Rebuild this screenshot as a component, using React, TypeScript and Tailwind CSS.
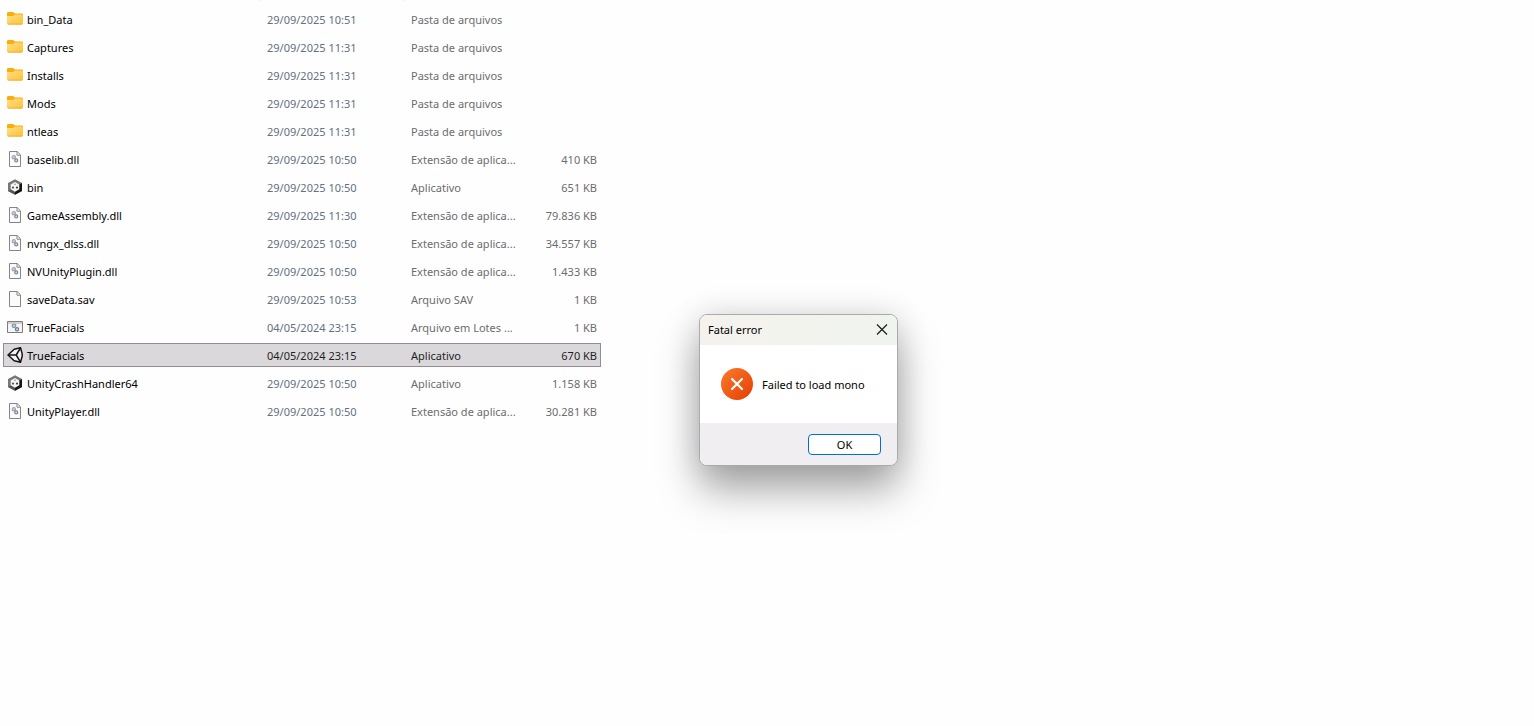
import type { ReactNode } from 'react';

type IconKind = 'folder' | 'dll' | 'cube' | 'blank' | 'batch' | 'unity';

interface FileEntry {
  name: string;
  icon: IconKind;
  modified: string;
  type: string;
  size?: string;
  selected?: boolean;
}

const files: FileEntry[] = [
  { name: 'bin_Data', icon: 'folder', modified: '29/09/2025 10:51', type: 'Pasta de arquivos' },
  { name: 'Captures', icon: 'folder', modified: '29/09/2025 11:31', type: 'Pasta de arquivos' },
  { name: 'Installs', icon: 'folder', modified: '29/09/2025 11:31', type: 'Pasta de arquivos' },
  { name: 'Mods', icon: 'folder', modified: '29/09/2025 11:31', type: 'Pasta de arquivos' },
  { name: 'ntleas', icon: 'folder', modified: '29/09/2025 11:31', type: 'Pasta de arquivos' },
  { name: 'baselib.dll', icon: 'dll', modified: '29/09/2025 10:50', type: 'Extensão de aplica...', size: '410 KB' },
  { name: 'bin', icon: 'cube', modified: '29/09/2025 10:50', type: 'Aplicativo', size: '651 KB' },
  { name: 'GameAssembly.dll', icon: 'dll', modified: '29/09/2025 11:30', type: 'Extensão de aplica...', size: '79.836 KB' },
  { name: 'nvngx_dlss.dll', icon: 'dll', modified: '29/09/2025 10:50', type: 'Extensão de aplica...', size: '34.557 KB' },
  { name: 'NVUnityPlugin.dll', icon: 'dll', modified: '29/09/2025 10:50', type: 'Extensão de aplica...', size: '1.433 KB' },
  { name: 'saveData.sav', icon: 'blank', modified: '29/09/2025 10:53', type: 'Arquivo SAV', size: '1 KB' },
  { name: 'TrueFacials', icon: 'batch', modified: '04/05/2024 23:15', type: 'Arquivo em Lotes ...', size: '1 KB' },
  { name: 'TrueFacials', icon: 'unity', modified: '04/05/2024 23:15', type: 'Aplicativo', size: '670 KB', selected: true },
  { name: 'UnityCrashHandler64', icon: 'cube', modified: '29/09/2025 10:50', type: 'Aplicativo', size: '1.158 KB' },
  { name: 'UnityPlayer.dll', icon: 'dll', modified: '29/09/2025 10:50', type: 'Extensão de aplica...', size: '30.281 KB' },
];

const page = (
  <>
    <path d="M2.5 .5h7.7l3.3 3.3v11.7h-11z" fill="#fbfbfb" stroke="#858585" />
    <path d="M10 .8v3.4h3.3" fill="none" stroke="#858585" />
  </>
);

const drawings: Record<IconKind, ReactNode> = {
  folder: (
    <>
      <defs>
        <linearGradient id="folder-front" x1="0" y1="0" x2="1" y2="1">
          <stop offset="0" stopColor="#ffe08a" />
          <stop offset="1" stopColor="#fcc135" />
        </linearGradient>
      </defs>
      <path d="M0 2.4C0 1.6 .6 1 1.4 1h4.1c.5 0 .8 .1 1.1 .4L8 2.6h6.600c.8 0 1.4 .6 1.4 1.4v3H0z" fill="#fbad0c" />
      <path d="M0 5h5.600c.4 0 .8 -.1 1.1 -.4l.8 -.7c.3 -.2 .5 -.3 .9 -.3h6.200c.8 0 1.4 .6 1.4 1.4v7c0 .8 -.6 1.4 -1.4 1.4H1.4C.6 13.4 0 12.8 0 12z" fill="url(#folder-front)" />
      <path d="M.3 12.8c.3 .4 .6 .6 1.1 .6h13.200c.5 0 .9 -.2 1.1 -.6z" fill="#eaa31c" />
    </>
  ),
  dll: (
    <>
      {page}
      <circle cx="6.8" cy="6.2" r="1.7" fill="#c3ccd6" stroke="#a2a9b2" strokeWidth="1.2" />
      <circle cx="9.2" cy="9.4" r="1.5" fill="#dbe2ea" stroke="#7f868f" strokeWidth="1.2" />
    </>
  ),
  blank: page,
  batch: (
    <>
      <path d="M.5 2.5h15v11H.5z" fill="#f4f4f4" stroke="#7d7d7d" />
      <path d="M1 4h14" stroke="#a9a9a9" />
      <circle cx="7" cy="6.8" r="1.8" fill="#b9cedd" stroke="#8295a6" strokeWidth="1.2" />
      <circle cx="10" cy="10.2" r="1.6" fill="#c9dbe8" stroke="#6f7d8a" strokeWidth="1.2" />
    </>
  ),
  cube: (
    <>
      <path d="M8 .3l7 3.8v7.8l-7 3.8-7-3.8V4.1z" fill="#777" />
      <path d="M15 4.1v7.8l-7 3.8V8z" fill="#161616" />
      <path d="M1 11.9L8 8v7.7z" fill="#555" />
      <path d="M8 3l4.3 2.4v4.9L8 12.8l-4.3-2.5V5.4z" fill="#f5f5f5" />
      <circle cx="8" cy="5.2" r=".8" fill="#888" />
      <circle cx="6" cy="8.6" r="1.1" fill="#555" />
      <circle cx="10" cy="8.6" r="1.1" fill="#444" />
    </>
  ),
  unity: (
    <>
      <path
        d="M1 8l6.2-5.8 6.3-1.5 1.7 6.2v2.2l-1.7 6.2-6.3-1.5z"
        fill="#f3f3f3"
        stroke="#141414"
        strokeWidth="1.5"
        strokeLinejoin="round"
      />
      <path d="M1 8h8.2M9.2 8l4.3-7.2M9.2 8l4.3 7.2" fill="none" stroke="#141414" strokeWidth="1.5" />
    </>
  ),
};

function FileIcon({ kind }: { kind: IconKind }) {
  return (
    <svg viewBox="0 0 16 16" className="size-4 shrink-0" aria-hidden="true">
      {drawings[kind]}
    </svg>
  );
}

function FileList() {
  return (
    <table className="w-[598px] table-fixed border-separate border-spacing-x-0 border-spacing-y-1">
      <colgroup>
        <col className="w-[257px]" />
        <col className="w-36" />
        <col />
        <col className="w-20" />
      </colgroup>
      <tbody>
        {files.map((file, index) => (
          <tr
            key={index}
            aria-selected={file.selected}
            className={
              file.selected
                ? 'h-6 bg-[#dad8db] text-[#1f1f1f] outline -outline-offset-1 outline-[#918d93]'
                : 'h-6 text-[#6c6c70]'
            }
          >
            <td className="p-0 pl-1">
              <div className="flex items-center gap-1 text-black">
                <FileIcon kind={file.icon} />
                <span className="pt-0.5">{file.name}</span>
              </div>
            </td>
            <td className={file.selected ? 'p-0 pt-0.5 pl-[7px]' : 'p-0 pt-0.5 pl-[7px] text-[#64707f]'}>
              {file.modified}
            </td>
            <td className="p-0 pt-0.5 pl-[7px] whitespace-nowrap">{file.type}</td>
            <td className="p-0 pt-0.5 pr-1 text-right">{file.size}</td>
          </tr>
        ))}
      </tbody>
    </table>
  );
}

function ErrorDialog() {
  return (
    <div
      role="alertdialog"
      aria-labelledby="dialog-title"
      aria-describedby="dialog-message"
      className="absolute top-[314px] left-[699px] w-[199px] overflow-hidden rounded-lg border border-[#aaa9ab] bg-white text-black shadow-[0_24px_40px_rgba(0,0,0,0.34),0_0_32px_rgba(0,0,0,0.12)]"
    >
      <div className="flex h-[30px] items-center justify-between bg-linear-to-r from-[#f5f2ee] to-[#f0f4ee] pr-[7px] pl-2">
        <h1 id="dialog-title">Fatal error</h1>
        <button type="button" aria-label="Fechar" className="flex size-4 items-center justify-center">
          <svg viewBox="0 0 12 12" className="size-3" aria-hidden="true">
            <path d="M1 .5l10 10M11 .5L1 10.5" stroke="#1c1c1c" strokeWidth="1.2" />
          </svg>
        </button>
      </div>
      <div className="flex h-[78px] items-center gap-[9px] pl-[21px]">
        <svg viewBox="0 0 32 32" className="size-8 shrink-0" aria-hidden="true">
          <defs>
            <linearGradient id="error-fill" x1="0" y1="0" x2="1" y2="1">
              <stop offset="0" stopColor="#fb7a2e" />
              <stop offset="1" stopColor="#e53e00" />
            </linearGradient>
          </defs>
          <circle cx="16" cy="16" r="16" fill="url(#error-fill)" />
          <path d="M11 11l10 10M21 11L11 21" stroke="#fff" strokeWidth="2.2" strokeLinecap="round" />
        </svg>
        <p id="dialog-message" className="pt-0.5 whitespace-nowrap">Failed to load mono</p>
      </div>
      <div className="flex h-[42px] items-center justify-end bg-[#f0eef1] pr-4">
        <button
          type="button"
          className="flex h-[21px] w-[73px] items-center justify-center rounded-sm border border-[#0070cf] bg-white pt-0.5"
        >
          OK
        </button>
      </div>
    </div>
  );
}

export default function App() {
  return (
    <main className="relative min-h-screen bg-[#fefefe] pl-[3px] font-['Noto_Sans','Open_Sans',sans-serif] text-[11px] leading-4">
      {/* lower edge of the column dividers */}
      <div className="flex h-[3px] items-start pl-[257px]">
        <span className="h-px w-36 border-l border-[#e2e2e2]" />
        <span className="h-px w-36 border-l border-[#e2e2e2]" />
      </div>
      <FileList />
      <ErrorDialog />
    </main>
  );
}
